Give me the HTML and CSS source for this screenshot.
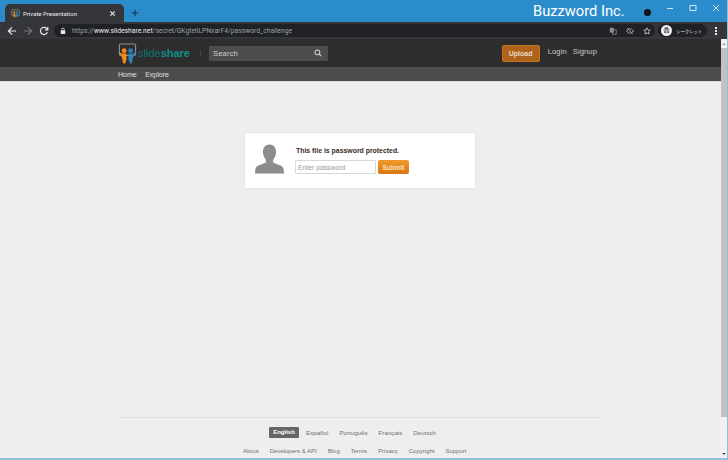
FILE: index.html
```html
<!DOCTYPE html>
<html lang="en">
<head>
    <meta charset="UTF-8">
    <meta name="viewport" content="width=device-width, initial-scale=1.0">
    <title>Private Presentation</title>
    <link rel="stylesheet" href="styles.css">
</head>
<body>
    <div class="window">
        <div class="titlebar">
            <div class="tab">
                <svg class="favicon" viewBox="0 0 12 12"><rect x="1" y="1" width="10" height="8" rx="1" fill="none" stroke="#8a8f94"/><circle cx="4.3" cy="4.5" r="1.4" fill="#e88a1a"/><circle cx="7.7" cy="4.5" r="1.4" fill="#2a7fb8"/><path d="M2.8 6h3v5h-2z" fill="#e88a1a"/><path d="M6.2 6h3l-1 5h-2z" fill="#2a7fb8"/></svg>
                <span class="tab-title">Private Presentation</span>
                <svg class="tab-close" viewBox="0 0 8 8"><path d="M1.5 1.5l5 5M6.5 1.5l-5 5" stroke="#e8eaed" stroke-width="1.3"/></svg>
            </div>
            <svg class="new-tab" viewBox="0 0 10 10"><path d="M5 1v8M1 5h8" stroke="#14324a" stroke-width="1.3"/></svg>
            <div class="brand">Buzzword Inc.</div>
            <span class="camera-dot"></span>
            <div class="win-controls">
                <svg viewBox="0 0 8 8"><path d="M1 4.5h6" stroke="#cfe4f3" stroke-width="1"/></svg>
                <svg viewBox="0 0 8 8"><rect x="1" y="1.5" width="6" height="5" fill="none" stroke="#cfe4f3" stroke-width="1"/></svg>
                <svg viewBox="0 0 8 8"><path d="M1 1l6 6M7 1l-6 6" stroke="#cfe4f3" stroke-width="1"/></svg>
            </div>
        </div>

        <div class="toolbar">
            <svg class="tool-icon" viewBox="0 0 10 10"><path d="M9 5H1.5M5 1.4L1.4 5 5 8.6" fill="none" stroke="#e8eaed" stroke-width="1.2"/></svg>
            <svg class="tool-icon" viewBox="0 0 10 10"><path d="M1 5h7.5M5 1.4L8.6 5 5 8.6" fill="none" stroke="#74777b" stroke-width="1.2"/></svg>
            <svg class="tool-icon" viewBox="0 0 10 10"><path d="M8.4 6.2A3.6 3.6 0 1 1 7.6 2.4L8.8 3.6M8.8 1v2.8H6" fill="none" stroke="#e8eaed" stroke-width="1.2"/></svg>
            <div class="omnibox">
                <svg class="lock" viewBox="0 0 8 10"><rect x="1" y="4" width="6" height="5" rx=".6" fill="#e8eaed"/><path d="M2.2 4V3a1.8 1.8 0 0 1 3.6 0v1" fill="none" stroke="#e8eaed"/></svg>
                <span class="url"><span class="url-dim">https://</span><span class="url-host">www.slideshare.net</span><span class="url-dim">/secret/GKgtellLPNxarF4/password_challenge</span></span>
                <div class="omni-icons">
                    <svg viewBox="0 0 10 10"><rect x="1" y="1" width="5" height="6" fill="#8a8d91"/><rect x="4.5" y="3.5" width="4.5" height="5.5" fill="none" stroke="#8a8d91"/></svg>
                    <svg viewBox="0 0 10 10"><path d="M.8 5C2 3 3.5 2.2 5 2.2S8 3 9.2 5C8 7 6.500 7.800 5 7.800S2 7 .8 5z" fill="none" stroke="#bdc1c6"/><path d="M1.500 1.500l7 7" stroke="#bdc1c6"/></svg>
                    <svg viewBox="0 0 10 10"><path d="M5 1l1.200 2.700 2.900.3-2.200 1.900.7 2.900L5 7.300 2.400 8.800l.7-2.900L.9 4l2.900-.3z" fill="none" stroke="#e8eaed" stroke-width=".9"/></svg>
                </div>
            </div>
            <div class="incognito">
                <span class="incognito-face"><svg viewBox="0 0 10 10"><path d="M2.500 4l.8-2.500h3.400L7.500 4zM1.500 4.300h7v.6h-7z" fill="#5f6368"/><circle cx="3.500" cy="6.800" r="1.300" fill="#5f6368"/><circle cx="6.500" cy="6.800" r="1.300" fill="#5f6368"/></svg></span>
                <span class="incognito-label">シークレット</span>
            </div>
            <div class="menu-dots"><i></i><i></i><i></i></div>
        </div>

        <div class="viewport">
            <div class="page">
                <header class="site-header">
                    <div class="logo">
                        <svg class="logo-mark" viewBox="0 0 20 22"><rect x="1.500" y="1" width="17" height="12" rx="1.500" fill="none" stroke="#8b9196" stroke-width="1.200"/><circle cx="6.500" cy="8" r="2.600" fill="#ee8b1c"/><circle cx="13.300" cy="8" r="2.600" fill="#2a80b9"/><path d="M1 9.500l3 1.500h5v6l-1.500 4.500h-2L4 15z" fill="#ee8b1c"/><path d="M19 9.500l-3 1.500h-5v6l1.500 4.500h2L16 15z" fill="#2a80b9"/></svg>
                        <span class="logo-text">slide<b>share</b></span>
                    </div>
                    <span class="header-divider"></span>
                    <div class="search">
                        <span>Search</span>
                        <svg class="search-icon" viewBox="0 0 10 10"><circle cx="4.200" cy="4.200" r="3" fill="none" stroke="#d6d6d6" stroke-width="1.300"/><path d="M6.500 6.500L9 9" stroke="#d6d6d6" stroke-width="1.500"/></svg>
                    </div>
                    <div class="header-actions">
                        <a class="upload-btn">Upload</a>
                        <a class="header-link">Login</a>
                        <a class="header-link">Signup</a>
                    </div>
                </header>
                <nav class="subnav">
                    <a>Home</a>
                    <a>Explore</a>
                </nav>

                <main class="content">
                    <div class="card">
                        <svg class="avatar" viewBox="0 0 30 30"><path d="M15 0c4.200 0 6.800 3.200 6.800 7.600 0 3.400-1.300 6.300-3 8.100v2.800c2.500 1.500 9.200 2.800 10.400 5.500.5 1.600.8 4 .8 6H0c0-2 .3-4.400.8-6 1.200-2.700 7.900-4 10.400-5.500v-2.800c-1.700-1.800-3-4.700-3-8.100C8.200 3.200 10.800 0 15 0z" fill="#8c8c8c"/></svg>
                        <div class="card-body">
                            <p class="card-title">This file is password protected.</p>
                            <form class="card-form">
                                <input class="password-input" type="text" placeholder="Enter password">
                                <button class="submit-btn" type="button">Submit</button>
                            </form>
                        </div>
                    </div>
                </main>

                <footer class="footer">
                    <div class="langs">
                        <a class="lang-active">English</a>
                        <a>Español</a>
                        <a>Português</a>
                        <a>Français</a>
                        <a>Deutsch</a>
                    </div>
                    <div class="footer-links">
                        <a>About</a>
                        <a>Developers &amp; API</a>
                        <a>Blog</a>
                        <a>Terms</a>
                        <a>Privacy</a>
                        <a>Copyright</a>
                        <a>Support</a>
                    </div>
                </footer>
            </div>
            <div class="scrollbar">
                <span class="arrow-up"></span>
                <div class="thumb"></div>
                <span class="arrow-down"></span>
            </div>
        </div>
    </div>
</body>
</html>
```

FILE: styles.css
```css
* {
    margin: 0;
    padding: 0;
    box-sizing: border-box;
}

body {
    font-family: 'Liberation Sans', Arial, sans-serif;
    width: 728px;
    height: 460px;
    overflow: hidden;
    background: #eeeeee;
}

a {
    display: block;
}

.window {
    display: flex;
    flex-direction: column;
    height: 460px;
    border-right: 1px solid #8fc1d8;
    border-bottom: 2px solid #8fc1d8;
}

/* title bar */
.titlebar {
    display: flex;
    align-items: flex-end;
    height: 22px;
    padding-left: 5px;
    background: #2b8ccb;
    position: relative;
}

.tab {
    display: flex;
    align-items: center;
    width: 119px;
    height: 18px;
    padding: 0 6px;
    background: #35363a;
    border-radius: 5px 5px 0 0;
}

.favicon {
    width: 9px;
    height: 11px;
    margin-right: 3px;
}

.tab-title {
    flex: 1;
    font-family: 'Roboto', sans-serif;
    font-size: 6px;
    color: #e8eaed;
}

.tab-close {
    width: 7px;
    height: 7px;
    margin-right: 2px;
}

.new-tab {
    width: 8px;
    height: 8px;
    margin: 0 0 5px 7px;
}

.brand {
    margin-left: 394px;
    align-self: center;
    font-family: 'Roboto', sans-serif;
    font-size: 14.700px;
    color: #ffffff;
    line-height: 22px;
}

.camera-dot {
    position: absolute;
    left: 644px;
    top: 9px;
    width: 7px;
    height: 7px;
    border-radius: 50%;
    background: #111c24;
    border: 2px solid #0d1418;
}

.win-controls {
    margin-left: auto;
    align-self: flex-start;
    display: flex;
    gap: 15px;
    padding: 4px 7px 0 0;
}

.win-controls svg {
    width: 8px;
    height: 8px;
}

/* toolbar */
.toolbar {
    display: flex;
    align-items: center;
    height: 17px;
    padding: 0 9px 0 7px;
    background: #35363a;
}

.tool-icon {
    width: 10px;
    height: 10px;
    margin-right: 6px;
}

.omnibox {
    display: flex;
    align-items: center;
    width: 601px;
    height: 13px;
    margin-left: -1px;
    padding: 0 4px 0 6px;
    background: #202124;
    border-radius: 7px;
}

.lock {
    width: 6px;
    height: 8px;
    margin-right: 5px;
}

.url {
    flex: 1;
    padding-left: 1px;
    font-family: 'Roboto', sans-serif;
    font-size: 6.750px;
    white-space: nowrap;
}

.url-dim {
    color: #9aa0a6;
}

.url-host {
    color: #e8eaed;
}

.omni-icons {
    display: flex;
    gap: 9px;
}

.omni-icons svg {
    width: 8px;
    height: 8px;
}

.incognito {
    display: flex;
    align-items: center;
    gap: 4px;
    width: 49px;
    height: 13px;
    margin-left: 3px;
    padding-left: 3px;
    background: #202124;
    border-radius: 7px;
}

.incognito-face {
    display: flex;
    flex-shrink: 0;
    width: 11px;
    height: 11px;
    padding: 1px;
    border-radius: 50%;
    background: #f1f3f4;
}

.incognito-label {
    font-family: 'Noto Sans CJK JP', sans-serif;
    font-size: 4.400px;
    color: #e8eaed;
    white-space: nowrap;
}

.menu-dots {
    display: flex;
    flex-direction: column;
    gap: 1px;
    margin-left: 8px;
}

.menu-dots i {
    width: 2px;
    height: 2px;
    background: #e8eaed;
}

/* page area */
.viewport {
    flex: 1;
    display: flex;
    min-height: 0;
}

.page {
    flex: 1;
    display: flex;
    flex-direction: column;
    min-width: 0;
}

.site-header {
    display: flex;
    align-items: center;
    height: 28px;
    padding: 0 124px 0 118px;
    background: #2d2d2d;
}

.logo {
    display: flex;
    align-items: center;
    width: 72px;
}

.logo-mark {
    flex-shrink: 0;
    width: 19px;
    height: 21px;
    margin-right: 1px;
}

.logo-text {
    font-size: 11px;
    color: #0b7673;
}

.logo-text b {
    font-weight: 700;
    color: #0f8f8c;
}

.header-divider {
    width: 1px;
    height: 6px;
    margin: 0 8px 0 10px;
    background: #444444;
}

.search {
    display: flex;
    align-items: center;
    justify-content: space-between;
    width: 119px;
    height: 15px;
    padding: 0 6px 0 4px;
    background: #4d4d4d;
    font-size: 7.500px;
    letter-spacing: .2px;
    color: #d0d0d0;
}

.search-icon {
    width: 8px;
    height: 8px;
}

.header-actions {
    display: flex;
    align-items: center;
    margin-left: auto;
}

.upload-btn {
    width: 38px;
    height: 17px;
    margin-right: 8px;
    background: #ae631c;
    border: 1px solid #c4761f;
    border-radius: 2px;
    color: #eadcc8;
    font-size: 7px;
    font-weight: 700;
    line-height: 15px;
    text-align: center;
}

.header-link {
    margin: 0 6px 3px 0;
    color: #cccccc;
    font-size: 7.600px;
    letter-spacing: .1px;
}

.header-link:last-child {
    margin-right: 0;
}

.subnav {
    display: flex;
    align-items: center;
    gap: 8.500px;
    height: 14px;
    padding-left: 118px;
    background: #4d4d4d;
    color: #e0e0e0;
    font-size: 7px;
}

.content {
    flex: 1;
    padding: 50px 0 0 244px;
    background: #eeeeee;
    border-top: 1px solid #dddddd;
}

.card {
    display: flex;
    width: 232px;
    height: 57px;
    padding: 11px 0 0 10px;
    background: #ffffff;
    border: 1px solid #e6e6e6;
    border-radius: 2px;
}

.avatar {
    width: 29px;
    height: 30px;
    margin-right: 12px;
}

.card-title {
    height: 16px;
    padding-top: 2px;
    color: #3a2a1a;
    font-size: 6.900px;
    font-weight: 700;
    line-height: 9px;
}

.card-form {
    display: flex;
    gap: 2px;
    margin-left: -1px;
}

.password-input {
    width: 81px;
    height: 14px;
    padding: 0 2px;
    background: #ffffff;
    border: 1px solid #d8d8d8;
    border-radius: 1px;
    font-family: 'Liberation Sans', sans-serif;
    font-size: 6.800px;
}

.password-input::placeholder {
    color: #999999;
}

.submit-btn {
    width: 31px;
    height: 14px;
    background: linear-gradient(#f09a2c, #d9780f);
    border: none;
    border-radius: 2px;
    color: #fbe0bd;
    font-family: 'Liberation Sans', sans-serif;
    font-size: 6.500px;
    font-weight: 700;
}

.footer {
    margin: 0 120px;
    height: 41px;
    border-top: 1px solid #dfdfdf;
    font-size: 6px;
    color: #707070;
}

.langs {
    display: flex;
    align-items: center;
    gap: 11px;
    height: 11px;
    margin-top: 9px;
    padding-left: 149px;
    font-size: 6.200px;
}

.lang-active {
    width: 30px;
    margin-right: -4px;
    line-height: 11px;
    background: #666666;
    border-radius: 1px;
    color: #ffffff;
    font-size: 6px;
    font-weight: 700;
    text-align: center;
}

.footer-links {
    display: flex;
    gap: 11px;
    margin-top: 10px;
    padding-left: 123px;
}

.scrollbar {
    display: flex;
    flex-direction: column;
    align-items: center;
    width: 6px;
    flex-shrink: 0;
    background: #f1f1f1;
}

.arrow-up,
.arrow-down {
    width: 0;
    height: 0;
    border-left: 2px solid transparent;
    border-right: 2px solid transparent;
}

.arrow-up {
    margin: 4px 0 3px;
    border-bottom: 2px solid #9b9b9b;
}

.thumb {
    width: 100%;
    height: 369px;
    background: #c1c1c1;
}

.arrow-down {
    margin-top: auto;
    margin-bottom: 3px;
    border-top: 2px solid #505050;
}
```
